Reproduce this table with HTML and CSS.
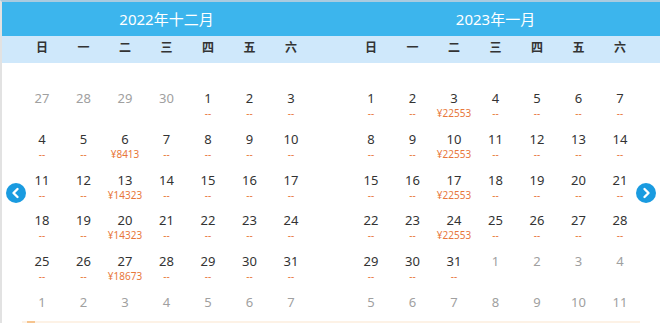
FILE: index.html
```html
<!DOCTYPE html>
<html lang="zh-CN">
<head>
<meta charset="utf-8">
<title>日历价格</title>
<link rel="stylesheet" href="styles.css">
</head>
<body>
<div class="cal">
  <div class="months">
    <section class="month">
      <div class="title">2022年十二月</div>
      <div class="weekdays"><span>日</span><span>一</span><span>二</span><span>三</span><span>四</span><span>五</span><span>六</span></div>
      <div class="days">
        <div class="d off"><b>27</b></div><div class="d off"><b>28</b></div><div class="d off"><b>29</b></div><div class="d off"><b>30</b></div><div class="d"><b>1</b><i>--</i></div><div class="d"><b>2</b><i>--</i></div><div class="d"><b>3</b><i>--</i></div>
        <div class="d"><b>4</b><i>--</i></div><div class="d"><b>5</b><i>--</i></div><div class="d"><b>6</b><i>¥8413</i></div><div class="d"><b>7</b><i>--</i></div><div class="d"><b>8</b><i>--</i></div><div class="d"><b>9</b><i>--</i></div><div class="d"><b>10</b><i>--</i></div>
        <div class="d"><b>11</b><i>--</i></div><div class="d"><b>12</b><i>--</i></div><div class="d"><b>13</b><i>¥14323</i></div><div class="d"><b>14</b><i>--</i></div><div class="d"><b>15</b><i>--</i></div><div class="d"><b>16</b><i>--</i></div><div class="d"><b>17</b><i>--</i></div>
        <div class="d"><b>18</b><i>--</i></div><div class="d"><b>19</b><i>--</i></div><div class="d"><b>20</b><i>¥14323</i></div><div class="d"><b>21</b><i>--</i></div><div class="d"><b>22</b><i>--</i></div><div class="d"><b>23</b><i>--</i></div><div class="d"><b>24</b><i>--</i></div>
        <div class="d"><b>25</b><i>--</i></div><div class="d"><b>26</b><i>--</i></div><div class="d"><b>27</b><i>¥18673</i></div><div class="d"><b>28</b><i>--</i></div><div class="d"><b>29</b><i>--</i></div><div class="d"><b>30</b><i>--</i></div><div class="d"><b>31</b><i>--</i></div>
        <div class="d off"><b>1</b></div><div class="d off"><b>2</b></div><div class="d off"><b>3</b></div><div class="d off"><b>4</b></div><div class="d off"><b>5</b></div><div class="d off"><b>6</b></div><div class="d off"><b>7</b></div>
      </div>
    </section>
    <section class="month">
      <div class="title">2023年一月</div>
      <div class="weekdays"><span>日</span><span>一</span><span>二</span><span>三</span><span>四</span><span>五</span><span>六</span></div>
      <div class="days">
        <div class="d"><b>1</b><i>--</i></div><div class="d"><b>2</b><i>--</i></div><div class="d"><b>3</b><i>¥22553</i></div><div class="d"><b>4</b><i>--</i></div><div class="d"><b>5</b><i>--</i></div><div class="d"><b>6</b><i>--</i></div><div class="d"><b>7</b><i>--</i></div>
        <div class="d"><b>8</b><i>--</i></div><div class="d"><b>9</b><i>--</i></div><div class="d"><b>10</b><i>¥22553</i></div><div class="d"><b>11</b><i>--</i></div><div class="d"><b>12</b><i>--</i></div><div class="d"><b>13</b><i>--</i></div><div class="d"><b>14</b><i>--</i></div>
        <div class="d"><b>15</b><i>--</i></div><div class="d"><b>16</b><i>--</i></div><div class="d"><b>17</b><i>¥22553</i></div><div class="d"><b>18</b><i>--</i></div><div class="d"><b>19</b><i>--</i></div><div class="d"><b>20</b><i>--</i></div><div class="d"><b>21</b><i>--</i></div>
        <div class="d"><b>22</b><i>--</i></div><div class="d"><b>23</b><i>--</i></div><div class="d"><b>24</b><i>¥22553</i></div><div class="d"><b>25</b><i>--</i></div><div class="d"><b>26</b><i>--</i></div><div class="d"><b>27</b><i>--</i></div><div class="d"><b>28</b><i>--</i></div>
        <div class="d"><b>29</b><i>--</i></div><div class="d"><b>30</b><i>--</i></div><div class="d"><b>31</b><i>--</i></div><div class="d off"><b>1</b></div><div class="d off"><b>2</b></div><div class="d off"><b>3</b></div><div class="d off"><b>4</b></div>
        <div class="d off"><b>5</b></div><div class="d off"><b>6</b></div><div class="d off"><b>7</b></div><div class="d off"><b>8</b></div><div class="d off"><b>9</b></div><div class="d off"><b>10</b></div><div class="d off"><b>11</b></div>
      </div>
    </section>
  </div>
  <div class="foot"><span class="foot-mark"></span></div>
  <button class="nav prev" aria-label="上个月"><svg width="20" height="20" viewBox="0 0 20 20"><path d="M11.5 6 L7.5 10 L11.5 14" fill="none" stroke="#fff" stroke-width="2.4" stroke-linecap="round" stroke-linejoin="round"/></svg></button>
  <button class="nav next" aria-label="下个月"><svg width="20" height="20" viewBox="0 0 20 20"><path d="M8.5 6 L12.5 10 L8.5 14" fill="none" stroke="#fff" stroke-width="2.4" stroke-linecap="round" stroke-linejoin="round"/></svg></button>
</div>
</body>
</html>
```
FILE: styles.css
```css
* { box-sizing: border-box; }
html, body { margin: 0; padding: 0; background: #fff; }
body {
  font-family: "Noto Sans", "Noto Sans CJK SC", sans-serif;
  width: 660px;
  height: 323px;
  overflow: hidden;
}
.cal {
  position: relative;
  width: 660px;
  height: 323px;
  border-top: 2px solid #a9cbe0;
  border-left: 2px solid #e2e2e2;
}
.months {
  display: flex;
}
.month {
  flex: 1 1 0;
}
.title {
  height: 34px;
  background: #3cb5ed;
  color: #fff;
  font-size: 15px;
  line-height: 34px;
  text-align: center;
}
.weekdays {
  height: 27px;
  background: #cfe8fb;
  display: grid;
  grid-template-columns: repeat(7, 41.5px);
  justify-content: center;
  padding-top: 1px;
}
.weekdays span {
  text-align: center;
  font-family: "Noto Sans CJK SC", sans-serif;
  font-weight: bold;
  font-size: 12px;
  line-height: 19px;
  color: #333;
}
.days {
  display: grid;
  grid-template-columns: repeat(7, 41.5px);
  grid-auto-rows: 40.8px;
  justify-content: center;
  padding-top: 26px;
}
.d {
  display: flex;
  flex-direction: column;
  align-items: center;
}
.d b {
  font-weight: normal;
  font-size: 13px;
  line-height: 18px;
  color: #333;
}
.d i {
  font-style: normal;
  font-size: 10px;
  line-height: 14px;
  margin-top: -1px;
  color: #e8773a;
}
.d.off b { color: #a0a0a0; }
.foot {
  position: absolute;
  left: 20px;
  right: 20px;
  bottom: 0;
  height: 2px;
  background: #fdf2e6;
}
.foot-mark {
  display: block;
  width: 8px;
  height: 2px;
  margin-left: 5px;
  background: #f6c48e;
}
.nav {
  position: absolute;
  top: 181px;
  width: 20px;
  height: 20px;
  padding: 0;
  border: 0;
  border-radius: 50%;
  background: #1a9be0;
  display: flex;
  align-items: center;
  justify-content: center;
  cursor: pointer;
}
.nav.prev { left: 4px; }
.nav.next { right: 4px; }
.nav svg { display: block; }
```
